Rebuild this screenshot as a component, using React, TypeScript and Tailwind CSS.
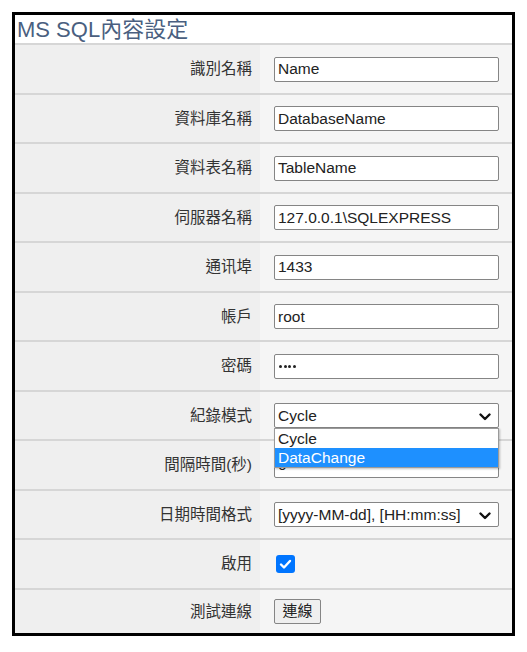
import React from "react";

const cjk = { fontFamily: '"Liberation Sans", "Noto Sans CJK TC", Arial, sans-serif' };

function Chevron() {
  return (
    <svg width="12" height="8" viewBox="0 0 12 8" className="absolute right-[7px] top-[9px]">
      <path d="M1.5 1.5 L6 6 L10.5 1.5" fill="none" stroke="#111" strokeWidth="2.4" strokeLinecap="round" strokeLinejoin="round" />
    </svg>
  );
}

function Input({ value }: { value: string }) {
  return (
    <div className="w-[225px] h-[25px] border border-[#858585] rounded-[2px] bg-white flex items-center px-[3px] text-[15.5px] text-[#222]" style={cjk}>
      {value}
    </div>
  );
}

function Row({ label, children, h }: { label: string; children: React.ReactNode; h: string }) {
  return (
    <div className={`flex border-t-2 border-[#d6d6d6] ${h}`}>
      <div className="w-[245px] bg-[#efefef] flex items-center justify-end pr-[8px] text-[15.5px] text-[#333]" style={cjk}>
        {label}
      </div>
      <div className="flex-1 bg-[#f5f5f5] flex items-center pl-[14px] relative">{children}</div>
    </div>
  );
}

export default function App() {
  return (
    <div className="w-[527px] h-[652px] bg-white pt-[12px] pl-[12px]">
      <div className="w-[503px] h-[624px] border-[3px] border-black bg-white flex flex-col">
        <div className="h-[28px] flex items-center pl-[2px] pt-[2px] text-[22px] text-[#4a5f80] leading-none" style={cjk}>
          MS SQL內容設定
        </div>
        <Row h="h-[50px]" label="識別名稱"><Input value="Name" /></Row>
        <Row h="h-[49px]" label="資料庫名稱"><Input value="DatabaseName" /></Row>
        <Row h="h-[50px]" label="資料表名稱"><Input value="TableName" /></Row>
        <Row h="h-[49px]" label="伺服器名稱"><Input value="127.0.0.1\SQLEXPRESS" /></Row>
        <Row h="h-[50px]" label="通讯埠"><Input value="1433" /></Row>
        <Row h="h-[49px]" label="帳戶"><Input value="root" /></Row>
        <Row h="h-[50px]" label="密碼">
          <div className="w-[225px] h-[25px] border border-[#858585] rounded-[2px] bg-white flex items-center px-[4px]">
            <span className="flex gap-[1.5px]">
              <span className="w-[3px] h-[3px] rounded-full bg-[#222]" />
              <span className="w-[3px] h-[3px] rounded-full bg-[#222]" />
              <span className="w-[3px] h-[3px] rounded-full bg-[#222]" />
              <span className="w-[3px] h-[3px] rounded-full bg-[#222]" />
            </span>
          </div>
        </Row>
        <Row h="h-[49px]" label="紀錄模式">
          <div className="relative w-[225px] h-[25px] border border-[#858585] rounded-[2px] bg-white flex items-center px-[3px] text-[15.5px] text-[#222]" style={cjk}>
            Cycle
            <Chevron />
          </div>
          <div className="absolute left-[14px] top-[36px] z-10 w-[225px] border border-[#9a9a9a] bg-white text-[15.5px] text-[#222] shadow-[1px_1px_2px_rgba(0,0,0,0.25)]" style={cjk}>
            <div className="h-[19px] flex items-center px-[3px]">Cycle</div>
            <div className="h-[19px] flex items-center px-[3px] bg-[#1e90ff] text-white">DataChange</div>
          </div>
        </Row>
        <Row h="h-[50px]" label="間隔時間(秒)"><Input value="0" /></Row>
        <Row h="h-[49px]" label="日期時間格式">
          <div className="relative w-[225px] h-[25px] border border-[#858585] rounded-[2px] bg-white flex items-center px-[3px] text-[15.5px] text-[#222]" style={cjk}>
            [yyyy-MM-dd], [HH:mm:ss]
            <Chevron />
          </div>
        </Row>
        <Row h="h-[50px]" label="啟用">
          <div className="ml-[2px] w-[19px] h-[18px] rounded-[3px] bg-[#0075ff] flex items-center justify-center">
            <svg width="13" height="11" viewBox="0 0 13 11">
              <path d="M2 5.5 L5 8.5 L11 2" fill="none" stroke="white" strokeWidth="2.4" strokeLinecap="round" strokeLinejoin="round" />
            </svg>
          </div>
        </Row>
        <Row h="flex-1" label="測試連線">
          <div className="h-[25px] w-[47px] justify-center border border-[#858585] rounded-[2px] bg-[#efefef] flex items-center text-[15px] text-[#222]" style={cjk}>
            連線
          </div>
        </Row>
      </div>
    </div>
  );
}
